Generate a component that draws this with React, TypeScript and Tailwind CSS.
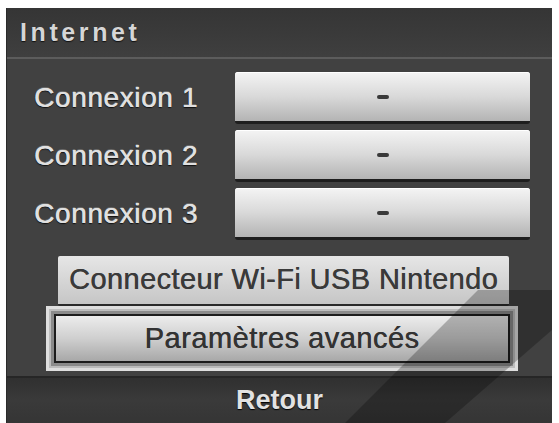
import React from "react";

const font = { fontFamily: '"Liberation Sans", Arial, sans-serif' };

function DashButton() {
  return (
    <div className="w-[295px] h-[52px] rounded-[3px] bg-gradient-to-b from-[#f4f4f4] via-[#d9d9d9] to-[#b4b4b4] border-b-[3px] border-[#1e1e1e] flex items-center justify-center shadow-[inset_0_1px_0_#ffffff]">
      <div className="w-[12px] h-[4px] rounded-full bg-[#3a3a3a]" />
    </div>
  );
}

function Row({ label }: { label: string }) {
  return (
    <div className="flex items-center h-[52px]">
      <div className="w-[228px] pl-[27px] text-[28px] text-[#e0e0e0] [text-shadow:0.5px_0_0_#e0e0e0,0_1px_1px_#111,0_-1px_0_#6a6a6a] tracking-[0.6px]">
        {label}
      </div>
      <DashButton />
    </div>
  );
}

export default function App() {
  return (
    <div className="w-[559px] h-[423px] bg-white relative overflow-hidden pt-[8px] pl-[6px]" style={font}>
      <div className="w-[546px] h-[415px] bg-[#414141] flex flex-col border-l border-[#2a2a2a]">
        <div className="h-[51px] bg-gradient-to-b from-[#353535] to-[#3f3f3f] px-[13px] flex items-center border-b-[2px] border-[#5c5c5c]">
          <span className="text-[25px] font-bold text-[#d6d6d6] tracking-[3.6px] [text-shadow:0_1px_1px_#111]">Internet</span>
        </div>
        <div className="mt-[13px] flex flex-col gap-[6px]">
          <Row label="Connexion 1" />
          <Row label="Connexion 2" />
          <Row label="Connexion 3" />
        </div>
        <div className="mt-[16px] ml-[51px] w-[451px] h-[50px] rounded-[2px] bg-gradient-to-b from-[#e6e6e6] to-[#c6c6c6] border-b-[2px] border-[#2a2a2a] flex items-center justify-center">
          <span className="text-[29px] text-[#3a3a3a] tracking-[0.4px] [text-shadow:0.4px_0_0_#3a3a3a]">Connecteur Wi-Fi USB Nintendo</span>
        </div>
        <div className="ml-[39px] w-[472px] h-[65px] border-[3px] border-[#dedede] bg-[#8a8a8a] p-[5px] shadow-[inset_0_0_0_2px_#bcbcbc]">
          <div className="w-full h-full border-[2px] border-[#1c1c1c] bg-gradient-to-b from-[#ececec] via-[#cfcfcf] to-[#a8a8a8] flex items-center justify-center">
            <span className="text-[29px] text-[#333] tracking-[0.5px] [text-shadow:0.4px_0_0_#333]">Paramètres avancés</span>
          </div>
        </div>
        <div className="mt-[5px] flex-1 bg-gradient-to-b from-[#303030] via-[#3a3a3a] to-[#353535] border-t-[2px] border-[#262626] flex items-center justify-center">
          <span className="text-[27px] font-bold text-[#e2e2e2] [text-shadow:0_1px_1px_#000]">Retour</span>
        </div>
      </div>
      <div
        className="absolute inset-0 pointer-events-none bg-black/25"
        style={{ clipPath: "polygon(478px 290px, 552px 290px, 552px 330px, 445px 423px, 345px 423px)" }}
      />
    </div>
  );
}
